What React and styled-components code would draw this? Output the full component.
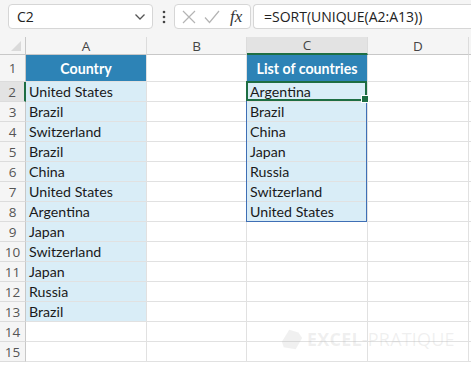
import React from "react";
import styled, { createGlobalStyle } from "styled-components";

const Global = createGlobalStyle`
  html, body { margin: 0; padding: 0; background: #ffffff; overflow: hidden; }
  body { font-family: "Open Sans", "Noto Sans", sans-serif; }
`;

const Page = styled.div`
  width: 471px;
  height: 366px;
  position: relative;
  overflow: hidden;
  background: #ffffff;
`;

const TopBar = styled.div`
  height: 37px;
  box-sizing: border-box;
  padding: 4px 0 0 8px;
  background: #f5f5f5;
  display: flex;
  align-items: flex-start;
`;

const NameBox = styled.div`
  width: 145px;
  height: 25px;
  box-sizing: border-box;
  background: #fff;
  border: 1px solid #d6d6d6;
  border-radius: 4px;
  display: flex;
  align-items: center;
  justify-content: space-between;
  padding: 0 6px 0 8px;
  font-size: 14px;
  color: #222;
`;

const Dots = styled.div`
  width: 21px;
  display: flex;
  justify-content: center;
  align-items: center;
  height: 25px;
`;

const FxBox = styled.div`
  width: 77px;
  height: 25px;
  box-sizing: border-box;
  background: #fff;
  border: 1px solid #d6d6d6;
  border-radius: 4px;
  display: flex;
  align-items: center;
  padding-left: 7px;
  gap: 8px;
`;

const FxLabel = styled.span`
  font-family: "Liberation Serif", serif;
  font-style: italic;
  font-size: 17px;
  color: #333;
  margin-left: 2px;
`;

const FormulaBox = styled.div`
  flex: 1;
  height: 25px;
  margin-left: 2px;
  box-sizing: border-box;
  background: #fff;
  border: 1px solid #d6d6d6;
  border-right: none;
  border-radius: 4px 0 0 4px;
  display: flex;
  align-items: center;
  padding-left: 10px;
  font-size: 14px;
  color: #222;
`;

const Sheet = styled.div`
  display: grid;
  grid-template-columns: 26px 121px 100px 121px 101px 1fr;
  grid-template-rows: 18px 27px repeat(14, 20px);
`;

const Cell = styled.div`
  box-sizing: border-box;
  border-right: 1px solid #e1e1e1;
  border-bottom: 1px solid #e1e1e1;
  display: flex;
  align-items: center;
  padding-left: 3px;
  font-family: "Lato", "Open Sans", sans-serif;
  font-size: 14.2px;
  color: #1a1a1a;
  white-space: nowrap;
  overflow: hidden;
  background: ${(p) => (p.$fill ? "#d9edf7" : "#fff")};
  position: relative;
  overflow: visible;
`;

const HeadCell = styled(Cell)`
  background: #2d83b6;
  color: #fff;
  font-weight: 700;
  justify-content: center;
  padding-left: 0;
`;

const ColHead = styled.div`
  box-sizing: border-box;
  background: ${(p) => (p.$active ? "#e3e3e3" : "#f5f5f5")};
  border-right: 1px solid #dcdcdc;
  border-bottom: ${(p) => (p.$active ? "2px solid #1e6e43" : "1px solid #c8c8c8")};
  display: flex;
  align-items: center;
  justify-content: center;
  font-size: 13.5px;
  color: #444;
`;

const Corner = styled(ColHead)`
  position: relative;
  border-right: 1px solid #c8c8c8;
`;

const CornerTri = styled.div`
  position: absolute;
  right: 4px;
  bottom: 3px;
  width: 0;
  height: 0;
  border-left: 10px solid transparent;
  border-bottom: 10px solid #dadada;
`;

const RowHead = styled.div`
  box-sizing: border-box;
  background: ${(p) => (p.$active ? "#e3e3e3" : "#f5f5f5")};
  border-right: ${(p) => (p.$active ? "2px solid #1e6e43" : "1px solid #c8c8c8")};
  border-bottom: 1px solid #dcdcdc;
  display: flex;
  align-items: center;
  justify-content: center;
  font-size: 13.5px;
  color: #555;
`;

const Selection = styled.div`
  position: absolute;
  inset: -1px 0 0 -1px;
  border: 2px solid #1e6e43;
  pointer-events: none;
  z-index: 2;
`;

const Handle = styled.div`
  position: absolute;
  right: -4px;
  bottom: -4px;
  width: 6px;
  height: 6px;
  background: #1e6e43;
  border: 1px solid #fff;
`;

const Spill = styled.div`
  position: absolute;
  left: 246px;
  top: 81px;
  width: 121px;
  height: 141px;
  box-sizing: border-box;
  border: 1px solid #3f6fb5;
  pointer-events: none;
  z-index: 1;
`;

const Watermark = styled.div`
  position: absolute;
  left: 280px;
  top: 327px;
  display: flex;
  align-items: center;
  gap: 3px;
  font-family: "Open Sans", sans-serif;
  font-size: 18px;
  color: rgba(185, 185, 185, 0.22);
  letter-spacing: 0.2px;
  pointer-events: none;
`;

const Bold = styled.span`
  font-weight: 700;
`;

const Light = styled.span`
  font-weight: 400;
`;

const countries = [
  "United States",
  "Brazil",
  "Switzerland",
  "Brazil",
  "China",
  "United States",
  "Argentina",
  "Japan",
  "Switzerland",
  "Japan",
  "Russia",
  "Brazil",
];

const sorted = [
  "Argentina",
  "Brazil",
  "China",
  "Japan",
  "Russia",
  "Switzerland",
  "United States",
];

export default function App() {
  const rows = [];
  for (let r = 2; r <= 15; r++) {
    const a = countries[r - 2];
    const c = sorted[r - 2];
    rows.push(
      <React.Fragment key={r}>
        <RowHead $active={r === 2}>{r}</RowHead>
        <Cell $fill={!!a}>{a || ""}</Cell>
        <Cell />
        <Cell $fill={!!c}>
          {c || ""}
          {r === 2 && (
            <Selection>
              <Handle />
            </Selection>
          )}
        </Cell>
        <Cell />
        <Cell />
      </React.Fragment>
    );
  }
  return (
    <Page>
      <Global />
      <TopBar>
        <NameBox>
          <span>C2</span>
          <svg width="12" height="8" viewBox="0 0 12 8">
            <path d="M1.5 1.5 L6 6 L10.5 1.5" fill="none" stroke="#555" strokeWidth="1.3" />
          </svg>
        </NameBox>
        <Dots>
          <svg width="4" height="14" viewBox="0 0 4 14">
            <circle cx="2" cy="2" r="1.3" fill="#444" />
            <circle cx="2" cy="7" r="1.3" fill="#444" />
            <circle cx="2" cy="12" r="1.3" fill="#444" />
          </svg>
        </Dots>
        <FxBox>
          <svg width="14" height="14" viewBox="0 0 14 14">
            <path d="M1 1 L13 13 M13 1 L1 13" stroke="#b4b4b4" strokeWidth="1.2" fill="none" />
          </svg>
          <svg width="16" height="14" viewBox="0 0 16 14">
            <path d="M1 7.5 L5.5 12.5 L15 1" stroke="#b4b4b4" strokeWidth="1.2" fill="none" />
          </svg>
          <FxLabel>fx</FxLabel>
        </FxBox>
        <FormulaBox>=SORT(UNIQUE(A2:A13))</FormulaBox>
      </TopBar>
      <Sheet>
        <Corner>
          <CornerTri />
        </Corner>
        <ColHead>A</ColHead>
        <ColHead>B</ColHead>
        <ColHead $active>C</ColHead>
        <ColHead>D</ColHead>
        <ColHead />
        <RowHead>1</RowHead>
        <HeadCell>Country</HeadCell>
        <Cell />
        <HeadCell>List of countries</HeadCell>
        <Cell />
        <Cell />
        {rows}
      </Sheet>
      <Spill />
      <Watermark>
        <svg width="24" height="24" viewBox="0 0 26 26">
          <path d="M2 16 L10 3 L20 6 L24 12 L17 24 L4 22 Z" fill="rgba(185,185,185,0.22)" />
        </svg>
        <span>
          <Bold>EXCEL</Bold>
          <Light>-PRATIQUE</Light>
        </span>
      </Watermark>
    </Page>
  );
}
